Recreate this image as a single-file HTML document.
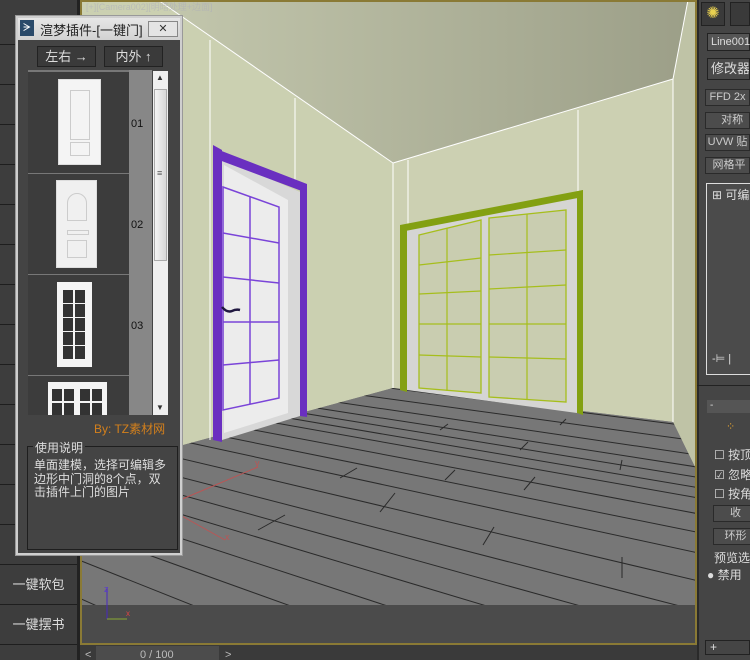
<!DOCTYPE html>
<html style="overflow:hidden"><head><meta charset="utf-8"><style>
*{margin:0;padding:0;box-sizing:border-box}
html,body{width:750px;height:660px;overflow:hidden}
body{background:#3c3c3c;position:relative;font-family:"Liberation Sans","Noto Sans CJK SC",sans-serif;}
.a{position:absolute}
.row{position:absolute;left:0;width:77px;height:40px;border-bottom:1px solid #1e1e1e;color:#ddd;font-size:13px;line-height:40px;text-align:center}
.rb{position:absolute;left:705px;width:45px;height:17px;background:#4c4c4c;border:1px solid #2a2a2a;color:#ccc;font-size:11px;line-height:15px;text-align:center;white-space:nowrap;overflow:hidden}
</style></head><body>
<div class="a" style="left:0;top:0;width:80px;height:660px;background:#3d3d3d;border-right:3px solid #222"></div>
<div class="row" style="top:5px"></div>
<div class="row" style="top:45px"></div>
<div class="row" style="top:85px"></div>
<div class="row" style="top:125px"></div>
<div class="row" style="top:165px"></div>
<div class="row" style="top:205px"></div>
<div class="row" style="top:245px"></div>
<div class="row" style="top:285px"></div>
<div class="row" style="top:325px"></div>
<div class="row" style="top:365px"></div>
<div class="row" style="top:405px"></div>
<div class="row" style="top:445px"></div>
<div class="row" style="top:485px"></div>
<div class="row" style="top:525px"></div>
<div class="row" style="top:565px">一键软包</div>
<div class="row" style="top:605px;height:40px">一键摆书</div>

<svg class="a" style="left:0;top:0" width="750" height="660" viewBox="0 0 750 660">
<defs>
<linearGradient id="ce" x1="0" x2="1" y1="0" y2="0"><stop offset="0" stop-color="#c3c7ad"/><stop offset="1" stop-color="#9c9f88"/></linearGradient>
<clipPath id="fl"><polygon points="393,388 673,422 695,467 695,605 80,605 80,473"/></clipPath>
</defs>
<rect x="80" y="0" width="617" height="645" fill="#777"/>
<polygon points="80,0 158,0 393,163 393,388 80,473" fill="#cbd0b1"/>
<polygon points="158,0 688,0 673,79 393,163" fill="url(#ce)"/>
<polygon points="393,163 673,79 673,422 393,388" fill="#ccd0b2"/>
<polygon points="688,0 695,0 695,467 673,422 673,79" fill="#bfc3a6"/>
<polygon points="393,388 673,422 695,467 695,605 80,605 80,473" fill="#777"/>
<g stroke="#fff" stroke-width="1" fill="none">
<line x1="158" y1="0" x2="393" y2="163"/><line x1="393" y1="163" x2="673" y2="79"/><line x1="673" y1="79" x2="688" y2="0"/>
<line x1="210" y1="40" x2="210" y2="440"/><line x1="295" y1="98" x2="295" y2="180"/><line x1="408" y1="160" x2="408" y2="226"/><line x1="578" y1="110" x2="578" y2="192"/><line x1="393" y1="163" x2="393" y2="388"/><line x1="673" y1="79" x2="673" y2="422"/>
</g>
<g clip-path="url(#fl)" stroke="#2a2a2a" stroke-width="1">
<line x1="-700" y1="250" x2="800" y2="440"/>
<line x1="-700" y1="250" x2="800" y2="455"/>
<line x1="-700" y1="250" x2="800" y2="470"/>
<line x1="-700" y1="250" x2="800" y2="483"/>
<line x1="-700" y1="250" x2="800" y2="494"/>
<line x1="-700" y1="250" x2="800" y2="505"/>
<line x1="-700" y1="250" x2="800" y2="516"/>
<line x1="-700" y1="250" x2="800" y2="533"/>
<line x1="-700" y1="250" x2="800" y2="553"/>
<line x1="-700" y1="250" x2="800" y2="575"/>
<line x1="-700" y1="250" x2="800" y2="605"/>
<line x1="-700" y1="250" x2="800" y2="637"/>
<line x1="-700" y1="250" x2="800" y2="667"/>
<line x1="-700" y1="250" x2="800" y2="700"/>
<line x1="-700" y1="250" x2="800" y2="741"/>
<line x1="-700" y1="250" x2="800" y2="789"/>
<line x1="-700" y1="250" x2="800" y2="847"/>
<line x1="-700" y1="250" x2="800" y2="920"/>
<line x1="-700" y1="250" x2="800" y2="1010"/>
<line x1="-700" y1="250" x2="800" y2="1130"/>
<line x1="380" y1="512" x2="395" y2="493"/><line x1="483" y1="545" x2="494" y2="527"/><line x1="622" y1="578" x2="622" y2="557"/>
<line x1="258" y1="530" x2="285" y2="515"/><line x1="340" y1="478" x2="357" y2="468"/><line x1="524" y1="490" x2="535" y2="477"/>
<line x1="445" y1="480" x2="455" y2="470"/><line x1="620" y1="470" x2="622" y2="460"/>
<line x1="520" y1="450" x2="528" y2="442"/><line x1="440" y1="430" x2="448" y2="424"/><line x1="560" y1="425" x2="566" y2="419"/>
</g>
<g stroke="#b55" stroke-width="1" fill="none"><line x1="180" y1="500" x2="258" y2="467"/><line x1="180" y1="515" x2="225" y2="540"/></g>
<text x="255" y="466" fill="#b55" font-size="9" font-family="Liberation Sans">y</text>
<text x="225" y="540" fill="#b55" font-size="9" font-family="Liberation Sans">x</text>
<polygon points="222,158 300,192 300,416 222,440" fill="#d8d8d8"/>
<polygon points="224,165 288,200 288,413 224,433" fill="#ececec"/>
<g fill="#6a2fc0">
<polygon points="213,145 222,150 222,442 213,440"/>
<polygon points="219,150 307,184 307,193 219,160"/>
<polygon points="300,188 307,190 307,417 300,416"/>
</g>
<g stroke="#7a44d8" stroke-width="1.5" fill="none">
<polygon points="223,187 279,207 279,398 223,410"/>
<line x1="250" y1="197" x2="250" y2="404"/>
<line x1="223" y1="233" x2="279" y2="243"/><line x1="223" y1="277" x2="279" y2="283"/><line x1="223" y1="322" x2="279" y2="322"/><line x1="223" y1="365" x2="279" y2="360"/>
</g>
<path d="M222,307 q5,6 10,4 q4,-2 8,-1" stroke="#201840" stroke-width="2.5" fill="none"/>
<polygon points="407,230 577,196 577,413 407,390" fill="#d5d5d3"/>
<g fill="#83a012">
<polygon points="400,225 583,190 583,197 400,232"/>
<polygon points="400,225 407,226 407,392 400,390"/>
<polygon points="577,192 583,190 583,415 577,413"/>
</g>
<g stroke="#a6be1c" stroke-width="1.3" fill="#c9cdb0">
<polygon points="419,235 481,220 481,393 419,388"/>
<polygon points="489,218 566,210 566,402 489,397"/>
</g>
<g stroke="#a6be1c" stroke-width="1.2">
<line x1="447" y1="228" x2="447" y2="391"/><line x1="527" y1="214" x2="527" y2="399"/>
<line x1="419" y1="265" x2="481" y2="258"/><line x1="419" y1="294" x2="481" y2="291"/><line x1="419" y1="324" x2="481" y2="324"/><line x1="419" y1="355" x2="481" y2="357"/>
<line x1="489" y1="255" x2="566" y2="250"/><line x1="489" y1="289" x2="566" y2="285"/><line x1="489" y1="324" x2="566" y2="324"/><line x1="489" y1="357" x2="566" y2="359"/>
</g>
<rect x="80" y="605" width="617" height="40" fill="#4b4b4b"/>
<rect x="80" y="0" width="2" height="645" fill="#8a7a35"/>
<rect x="80" y="643" width="617" height="2" fill="#8a7a35"/>
<rect x="80" y="0" width="617" height="2" fill="#8a7a35"/>
<rect x="695" y="0" width="2" height="645" fill="#8a7a35"/>
<line x1="107" y1="588" x2="107" y2="619" stroke="#4a2ac0"/><line x1="107" y1="619" x2="127" y2="619" stroke="#8a3"/>
<text x="104" y="592" fill="#5a3ad0" font-size="9" font-family="Liberation Sans">z</text>
<text x="126" y="616" fill="#d44" font-size="8" font-family="Liberation Sans">x</text>
<text x="86" y="10" fill="#aab" font-size="9" font-family="Liberation Sans" opacity=".5">[+][Camera002][明暗处理+边面]</text>
<rect x="80" y="645" width="617" height="15" fill="#3a3a3a"/>
<rect x="96" y="646" width="123" height="14" fill="#4c4c4c"/>
<text x="85" y="658" fill="#bbb" font-size="11" font-family="Liberation Sans">&lt;</text>
<text x="140" y="658" fill="#bbb" font-size="11" font-family="Liberation Sans">0 / 100</text>
<text x="225" y="658" fill="#bbb" font-size="11" font-family="Liberation Sans">&gt;</text>
</svg>

<div class="a" style="left:697px;top:0;width:53px;height:660px;background:#454545;border-left:2px solid #2a2a2a"></div>
<div class="a" style="left:701px;top:2px;width:24px;height:24px;background:#3a3a3a;border:1px solid #222;color:#e8d050;font-size:16px;text-align:center;line-height:22px">✺</div>
<div class="a" style="left:730px;top:2px;width:20px;height:24px;background:#3a3a3a;border:1px solid #222"></div>
<div class="a" style="left:707px;top:33px;width:43px;height:18px;background:#555;border:1px solid #222;color:#ddd;font-size:11px;line-height:16px;padding-left:3px">Line001</div>
<div class="a" style="left:707px;top:58px;width:43px;height:22px;background:#4a4a4a;border:1px solid #222;color:#ddd;font-size:13px;line-height:20px;padding-left:3px;white-space:nowrap;overflow:hidden">修改器列</div>
<div class="rb" style="top:89px">FFD 2x</div>
<div class="rb" style="top:112px">&nbsp;&nbsp;&nbsp;对称</div>
<div class="rb" style="top:134px">UVW 贴</div>
<div class="rb" style="top:157px">&nbsp;网格平</div>
<div class="a" style="left:706px;top:183px;width:44px;height:192px;border:1px solid #ddd;border-right:none;background:#4b4b4b"></div>
<div class="a" style="left:712px;top:186px;color:#ddd;font-size:12px;white-space:nowrap">⊞ 可编</div>
<div class="a" style="left:712px;top:352px;color:#ddd;font-size:11px">-⊨ |</div>
<div class="a" style="left:697px;top:385px;width:53px;height:1px;background:#222"></div>
<div class="a" style="left:707px;top:400px;width:43px;height:13px;background:#555;color:#ddd;font-size:10px;line-height:12px;padding-left:3px">-</div>
<div class="a" style="left:726px;top:420px;color:#e0a030;font-size:11px">⁘</div>
<div class="a" style="left:714px;top:446px;color:#ddd;font-size:12px;line-height:19.5px;white-space:nowrap">☐ 按顶<br>☑ 忽略<br>☐ 按角</div>
<div class="rb" style="top:505px;left:713px">收</div>
<div class="rb" style="top:528px;left:713px">环形</div>
<div class="a" style="left:714px;top:549px;color:#ddd;font-size:12px;white-space:nowrap">预览选</div>
<div class="a" style="left:707px;top:566px;color:#ddd;font-size:12px;white-space:nowrap">● 禁用</div>
<div class="a" style="left:705px;top:640px;width:45px;height:15px;border:1px solid #222;color:#ddd;font-size:12px;line-height:13px;padding-left:4px">+</div>

<div class="a" style="left:15px;top:15px;width:168px;height:541px;background:#cfcfcf;border:1px solid #999"></div>
<div class="a" style="left:18px;top:18px;width:162px;height:22px;background:linear-gradient(#e6e6e6,#d2d2d2)"></div>
<div class="a" style="left:20px;top:20px;width:14px;height:16px;background:#2a4a6a;color:#fff;font-size:11px;line-height:16px;text-align:center">ᗒ</div>
<div class="a" style="left:40px;top:20px;color:#222;font-size:13px;white-space:nowrap">渲梦插件-[一键门]</div>
<div class="a" style="left:148px;top:21px;width:30px;height:16px;background:#e4e4e4;border:1px solid #888;color:#333;font-size:11px;text-align:center;line-height:14px">✕</div>
<div class="a" style="left:18px;top:40px;width:162px;height:513px;background:#444"></div>
<div class="a" style="left:37px;top:46px;width:59px;height:21px;background:#3a3a3a;border:1px solid #222;color:#ddd;font-size:13px;text-align:center;line-height:19px">左右 →</div>
<div class="a" style="left:104px;top:46px;width:59px;height:21px;background:#3a3a3a;border:1px solid #222;color:#ddd;font-size:13px;text-align:center;line-height:19px">内外 ↑</div>
<div class="a" style="left:28px;top:70px;width:101px;height:345px;background:#3c3c3c;border-top:2px solid #777"></div>
<div class="a" style="left:129px;top:70px;width:23px;height:345px;background:#878787"></div>
<div class="a" style="left:153px;top:71px;width:15px;height:344px;background:#efefef"></div>
<div class="a" style="left:154px;top:89px;width:13px;height:172px;background:linear-gradient(90deg,#f4f4f4,#d8d8d8);border:1px solid #aaa"></div>
<div class="a" style="left:156px;top:73px;font-size:8px;color:#333">▲</div>
<div class="a" style="left:156px;top:403px;font-size:8px;color:#333">▼</div>
<div class="a" style="left:157px;top:168px;font-size:9px;color:#555">≡</div>
<div class="a" style="left:28px;top:173px;width:101px;height:1px;background:#777"></div>
<div class="a" style="left:28px;top:274px;width:101px;height:1px;background:#777"></div>
<div class="a" style="left:28px;top:375px;width:101px;height:1px;background:#777"></div>
<div class="a" style="left:131px;top:118px;font-size:11px;color:#111">01</div>
<div class="a" style="left:131px;top:219px;font-size:11px;color:#111">02</div>
<div class="a" style="left:131px;top:320px;font-size:11px;color:#111">03</div>
<div class="a" style="left:58px;top:79px;width:43px;height:86px;background:#f4f4f4;border:1px solid #ddd"></div>
<div class="a" style="left:70px;top:90px;width:20px;height:50px;border:1px solid #ccc"></div>
<div class="a" style="left:70px;top:142px;width:20px;height:14px;border:1px solid #ccc"></div>
<div class="a" style="left:56px;top:180px;width:41px;height:88px;background:#f0f0f0;border:1px solid #ddd"></div>
<div class="a" style="left:67px;top:193px;width:20px;height:28px;border:1px solid #ccc;border-radius:10px 10px 0 0"></div>
<div class="a" style="left:67px;top:230px;width:22px;height:5px;border:1px solid #ccc"></div>
<div class="a" style="left:67px;top:240px;width:20px;height:18px;border:1px solid #ccc"></div>
<div class="a" style="left:57px;top:282px;width:35px;height:85px;background:#f4f4f4"></div>
<svg class="a" style="left:63px;top:290px" width="22" height="70"><g fill="#333"><rect x="0" y="0" width="10" height="13"/><rect x="12" y="0" width="10" height="13"/><rect x="0" y="14" width="10" height="13"/><rect x="12" y="14" width="10" height="13"/><rect x="0" y="28" width="10" height="13"/><rect x="12" y="28" width="10" height="13"/><rect x="0" y="42" width="10" height="13"/><rect x="12" y="42" width="10" height="13"/><rect x="0" y="56" width="10" height="13"/><rect x="12" y="56" width="10" height="13"/></g></svg>
<div class="a" style="left:48px;top:382px;width:59px;height:33px;background:#f4f4f4"></div>
<svg class="a" style="left:52px;top:389px" width="52" height="26"><g fill="#333"><rect x="0" y="0" width="10" height="12"/><rect x="12" y="0" width="10" height="12"/><rect x="28" y="0" width="10" height="12"/><rect x="40" y="0" width="10" height="12"/><rect x="0" y="14" width="10" height="12"/><rect x="12" y="14" width="10" height="12"/><rect x="28" y="14" width="10" height="12"/><rect x="40" y="14" width="10" height="12"/></g></svg>
<div class="a" style="left:94px;top:420px;color:#d4801c;font-size:12px;white-space:nowrap">By: TZ素材网</div>
<div class="a" style="left:27px;top:446px;width:151px;height:104px;border:1px solid #1e1e1e"></div>
<div class="a" style="left:33px;top:439px;background:#444;color:#ddd;font-size:12px;padding:0 2px">使用说明</div>
<div class="a" style="left:34px;top:459px;color:#ddd;font-size:12px;line-height:13.5px;white-space:nowrap">单面建模，选择可编辑多<br>边形中门洞的8个点，双<br>击插件上门的图片</div>
</body></html>
